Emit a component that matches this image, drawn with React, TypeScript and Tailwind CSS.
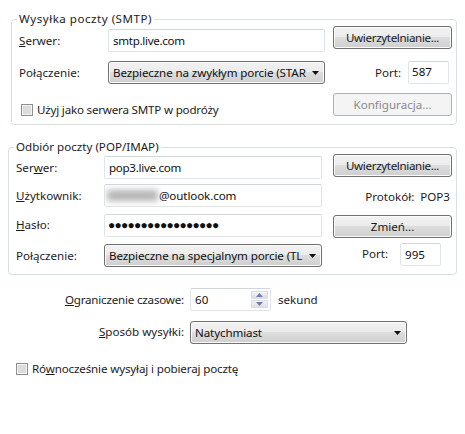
const btn = "h-[23px] w-[119px] rounded-[3px] border border-[#707070] bg-[linear-gradient(#f2f2f2_0%,#ebebeb_49%,#dddddd_50%,#cfcfcf_100%)] shadow-[inset_0_0_0_1px_#fbfbfb] flex items-center justify-center text-[#1a1a1a]";
const input = "h-[23px] rounded-[2px] border border-[#dde4ea] border-t-[#cfd6dc] bg-white flex items-center px-[4px] text-[#111] overflow-hidden whitespace-nowrap";
const selectCls = "h-[23px] rounded-[3px] border border-[#707070] bg-[linear-gradient(#f2f2f2_0%,#ebebeb_49%,#dddddd_50%,#cfcfcf_100%)] shadow-[inset_0_0_0_1px_#fbfbfb] flex items-center pl-[4px] pr-[5px] text-[#111] whitespace-nowrap";

function Select({ text, w }: { text: string; w: string }) {
  return (
    <div className={`${selectCls} ${w}`}>
      <span className="flex-1 tracking-[-0.12px]">{text}</span>
      <svg width="7" height="4" viewBox="0 0 7 4" className="shrink-0"><path d="M0 0h7L3.5 4z" fill="#111" /></svg>
    </div>
  );
}

function Check() {
  return <span className="block h-[12px] w-[12px] shrink-0 border border-[#8e8f8f] bg-[#dcdcdc] shadow-[inset_0_0_0_1px_#f4f4f4]" />;
}

export default function App() {
  return (
    <div className="h-[434px] w-[465px] bg-white text-[11.6px] leading-[16px] text-[#1c1c1c] font-['Noto_Sans','Open_Sans',sans-serif] overflow-hidden">
      <div className="pl-[11px] pr-[8px] pt-[11px]">
        <fieldset className="h-[114px] rounded-[4px] border border-[#d5dfe5] pl-[7px] pr-[4px]">
          <legend className="-ml-[2px] px-[2px] leading-[16px] tracking-[0.5px]">Wysyłka poczty (SMTP)</legend>
          <div className="flex gap-[8px]">
            <div className="w-[306px] pt-[2px]">
              <div className="flex items-center">
                <span className="w-[89px]"><u>S</u>erwer:</span>
                <div className={`${input} w-[217px] tracking-[-0.3px]`}>smtp.live.com</div>
              </div>
              <div className="mt-[9px] flex items-center">
                <span className="w-[89px]">Połączenie:</span>
                <Select w="w-[217px]" text="Bezpieczne na zwykłym porcie (STAR" />
              </div>
              <div className="mt-[18px] flex items-center gap-[4px] pl-[2px]">
                <Check />
                <span className="tracking-[-0.2px]">Użyj jako serwera SMTP w podróży</span>
              </div>
            </div>
            <div className="w-[119px] -mt-[1px]">
              <div className={`${btn} tracking-[-0.35px]`}>Uwierzytelnianie...</div>
              <div className="mt-[12px] flex items-center justify-end pr-[3px]">
                <span className="mr-[7px]">Port:</span>
                <div className={`${input} w-[41px] !pl-[3px] !pb-[2px]`}>587</div>
              </div>
              <div className="mt-[9px] flex h-[23px] w-[119px] items-center justify-center rounded-[3px] border border-[#adb2b5] bg-[#f4f4f4] text-[#8a8a8a]">Konfiguracja...</div>
            </div>
          </div>
        </fieldset>
      </div>

      <div className="pl-[8px] pr-[8px] pt-[14px]">
        <fieldset className="h-[136px] rounded-[4px] border border-[#d5dfe5] pl-[7px] pr-[4px]">
          <legend className="-ml-[2px] px-[2px] leading-[16px]">Odbiór poczty (POP/IMAP)</legend>
          <div className="flex gap-[11px]">
            <div className="w-[306px] mt-[1px]">
              <div className="flex items-center">
                <span className="w-[88px]">Ser<u>w</u>er:</span>
                <div className={`${input} w-[218px] tracking-[-0.3px]`}>pop3.live.com</div>
              </div>
              <div className="mt-[5px] flex items-center">
                <span className="w-[88px]"><u>U</u>żytkownik:</span>
                <div className={`${input} w-[218px] !px-[2px]`}>
                  <span className="mr-[1px] h-[11px] w-[51px] shrink-0 bg-[#b4b4b4] blur-[3px]" />
                  <span className="tracking-[-0.1px]">@outlook.com</span>
                </div>
              </div>
              <div className="mt-[7px] flex items-center">
                <span className="w-[88px] -mt-[1px]"><u>H</u>asło:</span>
                <div className={`${input} w-[218px] tracking-[-0.75px] text-[12px] !pl-[3px] !pb-[2px]`}>●●●●●●●●●●●●●●●●●</div>
              </div>
              <div className="mt-[7px] flex items-center">
                <span className="w-[88px]">Połączenie:</span>
                <Select w="w-[218px]" text="Bezpieczne na specjalnym porcie (TL" />
              </div>
            </div>
            <div className="w-[119px] -mt-[1px]">
              <div className={`${btn} tracking-[-0.35px]`}>Uwierzytelnianie...</div>
              <div className="mt-[12px] flex justify-end pr-[2px]">Protokół:&nbsp; POP3</div>
              <div className={`${btn} mt-[10px]`}>Zmień...</div>
              <div className="mt-[5px] flex items-center justify-end pr-[11px]">
                <span className="mr-[12px] -mt-[2px]">Port:</span>
                <div className={`${input} w-[41px]`}>995</div>
              </div>
            </div>
          </div>
        </fieldset>
      </div>

      <div className="mt-[13px] flex items-center">
        <span className="w-[184px] text-right tracking-[-0.2px]"><u>O</u>graniczenie czasowe:</span>
        <div className={`${input} ml-[6px] w-[81px] justify-between !pr-[2px]`}>
          <span>60</span>
          <div className="flex w-[17px] flex-col gap-[1px]">
            <div className="flex h-[8px] items-center justify-center border border-[#d9dee3] bg-[linear-gradient(#f3f3f3,#dcdfe3)]"><svg width="7" height="4" viewBox="0 0 7 4"><path d="M3.5 0L7 4H0z" fill="#6e7ea6" /></svg></div>
            <div className="flex h-[8px] items-center justify-center border border-[#d9dee3] bg-[linear-gradient(#f3f3f3,#dcdfe3)]"><svg width="7" height="4" viewBox="0 0 7 4"><path d="M0 0h7L3.5 4z" fill="#6e7ea6" /></svg></div>
          </div>
        </div>
        <span className="ml-[7px]">sekund</span>
      </div>
      <div className="mt-[10px] flex items-center">
        <span className="w-[184px] text-right -mt-[1px]"><u>S</u>posób wysyłki:</span>
        <Select w="ml-[6px] w-[217px]" text="Natychmiast" />
      </div>
      <div className="mt-[17px] flex items-center gap-[4px] pl-[16px]">
        <Check />
        <span className="tracking-[-0.15px]">Ró<u>w</u>nocześnie wysyłaj i pobieraj pocztę</span>
      </div>
    </div>
  );
}
